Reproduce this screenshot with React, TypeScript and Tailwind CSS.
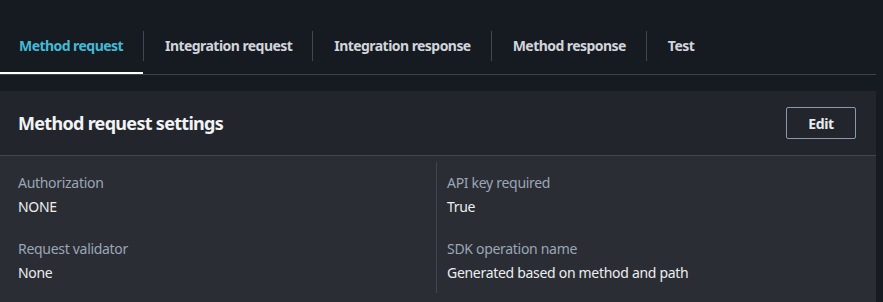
export default function App() {
  const tabs = [
    "Method request",
    "Integration request",
    "Integration response",
    "Method response",
    "Test",
  ];

  return (
    <div
      className="h-[302px] w-[883px] overflow-hidden bg-[#161a21] text-[14px] tracking-[-0.3px]"
      style={{ fontFamily: '"Noto Sans", "Open Sans", sans-serif' }}
    >
      {/* Tabs */}
      <div className="pt-[31px] w-[876px]">
        <div className="flex border-b border-[#3d424a]">
          {tabs.map((t, i) => (
            <div key={t} className="flex items-start">
              {i > 0 && <div className="h-[30px] w-px bg-[#414750]" />}
              <div
                className={
                  i === 0
                    ? "relative h-[43px] pl-[19px] pr-[20px] pt-[4px] font-bold tracking-[-0.55px] text-[#44b9d6]"
                    : "relative h-[43px] pl-[21px] pr-[20px] pt-[4px] font-bold tracking-[-0.55px] text-[#d1d5db]"
                }
              >
                {t}
                {i === 0 && (
                  <div className="absolute bottom-0 left-0 h-[2px] w-full bg-white" />
                )}
              </div>
            </div>
          ))}
        </div>
      </div>

      {/* Panel */}
      <div className="mt-[16px] w-[876px] bg-[#2a2d33]">
        <div className="flex h-[65px] items-center justify-between border-b border-[#414750] bg-[#22262c] pl-[18px] pr-[20px]">
          <h2 className="text-[18px] font-bold tracking-[-0.7px] text-[#f2f3f4]">
            Method request settings
          </h2>
          <button className="h-[32px] w-[70px] rounded-[2px] border border-[#8d99a8] font-bold tracking-[-0.4px] text-[#e9ebed]">
            Edit
          </button>
        </div>

        <div className="grid grid-cols-[418px_1fr] px-[18px] pb-[9px] pt-[6px]">
          <div className="pt-[11px] pb-[10px]">
            <div className="leading-[20px] text-[#9ba7b6]">Authorization</div>
            <div className="mt-[4px] leading-[20px] text-[#eceef0]">NONE</div>
            <div className="mt-[22px] leading-[20px] text-[#9ba7b6]">
              Request validator
            </div>
            <div className="mt-[4px] leading-[20px] text-[#eceef0]">None</div>
          </div>
          <div className="border-l border-[#414750] pl-[10px] pt-[11px] pb-[10px]">
            <div className="leading-[20px] text-[#9ba7b6]">API key required</div>
            <div className="mt-[4px] leading-[20px] text-[#eceef0]">True</div>
            <div className="mt-[22px] leading-[20px] text-[#9ba7b6]">
              SDK operation name
            </div>
            <div className="mt-[4px] leading-[20px] text-[#eceef0]">
              Generated based on method and path
            </div>
          </div>
        </div>
      </div>
    </div>
  );
}
